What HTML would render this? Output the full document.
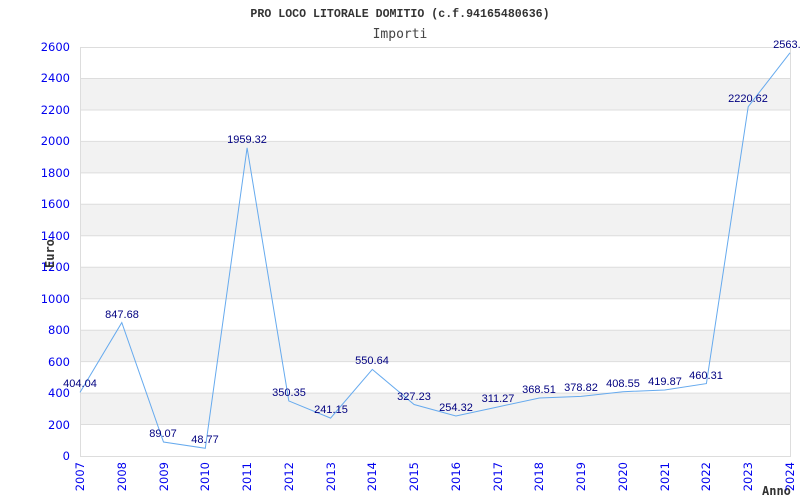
<!DOCTYPE html>
<html><head><meta charset="utf-8"><style>
html,body{margin:0;padding:0;background:#fff;}
svg{display:block;}
</style></head><body>
<svg width="800" height="500" xmlns="http://www.w3.org/2000/svg">
<rect width="800" height="500" fill="#fff"/>
<g fill="#f2f2f2">
<rect x="80" y="393.1" width="710" height="31.5"/>
<rect x="80" y="330.2" width="710" height="31.5"/>
<rect x="80" y="267.2" width="710" height="31.5"/>
<rect x="80" y="204.3" width="710" height="31.5"/>
<rect x="80" y="141.4" width="710" height="31.5"/>
<rect x="80" y="78.5" width="710" height="31.5"/>
</g>
<g stroke="#dddddd" stroke-width="1">
<line x1="80" y1="424.5" x2="790" y2="424.5"/>
<line x1="80" y1="393.1" x2="790" y2="393.1"/>
<line x1="80" y1="361.6" x2="790" y2="361.6"/>
<line x1="80" y1="330.2" x2="790" y2="330.2"/>
<line x1="80" y1="298.7" x2="790" y2="298.7"/>
<line x1="80" y1="267.2" x2="790" y2="267.2"/>
<line x1="80" y1="235.8" x2="790" y2="235.8"/>
<line x1="80" y1="204.3" x2="790" y2="204.3"/>
<line x1="80" y1="172.9" x2="790" y2="172.9"/>
<line x1="80" y1="141.4" x2="790" y2="141.4"/>
<line x1="80" y1="110" x2="790" y2="110"/>
<line x1="80" y1="78.5" x2="790" y2="78.5"/>
<rect x="80.5" y="47.5" width="710" height="409" fill="none"/>
</g>
<text x="400" y="17" text-anchor="middle" font-family="Liberation Mono, monospace" font-weight="bold" font-size="11.6" fill="#333">PRO LOCO LITORALE DOMITIO (c.f.94165480636)</text>
<text x="400" y="38" text-anchor="middle" font-family="DejaVu Sans Mono, monospace" font-size="13" fill="#444">Importi</text>
<g font-family="DejaVu Sans, sans-serif" font-size="11.5" fill="#0000ee" text-anchor="end">
<text x="70" y="460">0</text><text x="70" y="429">200</text><text x="70" y="397">400</text><text x="70" y="366">600</text><text x="70" y="334">800</text><text x="70" y="303">1000</text><text x="70" y="271">1200</text><text x="70" y="240">1400</text><text x="70" y="208">1600</text><text x="70" y="177">1800</text><text x="70" y="145">2000</text><text x="70" y="114">2200</text><text x="70" y="82">2400</text><text x="70" y="51">2600</text>
</g>
<text transform="translate(54,268) rotate(-90)" font-family="DejaVu Sans Mono, monospace" font-weight="bold" font-size="12" fill="#333">Euro</text>
<text x="762" y="495" font-family="DejaVu Sans Mono, monospace" font-weight="bold" font-size="12" fill="#333">Anno</text>
<g font-family="DejaVu Sans, sans-serif" font-size="11.5" fill="#0000ee" text-anchor="end">
<text transform="translate(84,462) rotate(-90)">2007</text>
<text transform="translate(126,462) rotate(-90)">2008</text>
<text transform="translate(168,462) rotate(-90)">2009</text>
<text transform="translate(209,462) rotate(-90)">2010</text>
<text transform="translate(251,462) rotate(-90)">2011</text>
<text transform="translate(293,462) rotate(-90)">2012</text>
<text transform="translate(335,462) rotate(-90)">2013</text>
<text transform="translate(376,462) rotate(-90)">2014</text>
<text transform="translate(418,462) rotate(-90)">2015</text>
<text transform="translate(460,462) rotate(-90)">2016</text>
<text transform="translate(502,462) rotate(-90)">2017</text>
<text transform="translate(543,462) rotate(-90)">2018</text>
<text transform="translate(585,462) rotate(-90)">2019</text>
<text transform="translate(627,462) rotate(-90)">2020</text>
<text transform="translate(669,462) rotate(-90)">2021</text>
<text transform="translate(710,462) rotate(-90)">2022</text>
<text transform="translate(752,462) rotate(-90)">2023</text>
<text transform="translate(794,462) rotate(-90)">2024</text>
</g>
<polyline fill="none" stroke="#66aaee" stroke-width="1" points="80,392.4 121.8,322.6 163.5,442 205.3,448.3 247.1,147.8 288.8,400.9 330.6,418.1 372.3,369.4 414.1,404.5 455.9,416 497.6,407 539.4,398 581.1,396.4 622.9,391.7 664.7,390 706.4,383.6 748.2,106.7 790,52.8"/>
<g font-family="Liberation Sans, sans-serif" font-size="11" fill="#000080" text-anchor="middle">
<text x="80" y="387">404.04</text>
<text x="122" y="318">847.68</text>
<text x="163" y="437">89.07</text>
<text x="205" y="443">48.77</text>
<text x="247" y="143">1959.32</text>
<text x="289" y="396">350.35</text>
<text x="331" y="413">241.15</text>
<text x="372" y="364">550.64</text>
<text x="414" y="400">327.23</text>
<text x="456" y="411">254.32</text>
<text x="498" y="402">311.27</text>
<text x="539" y="393">368.51</text>
<text x="581" y="391">378.82</text>
<text x="623" y="387">408.55</text>
<text x="665" y="385">419.87</text>
<text x="706" y="379">460.31</text>
<text x="748" y="102">2220.62</text>
<text x="790" y="48">2563.2</text>
</g>
</svg>
</body></html>
